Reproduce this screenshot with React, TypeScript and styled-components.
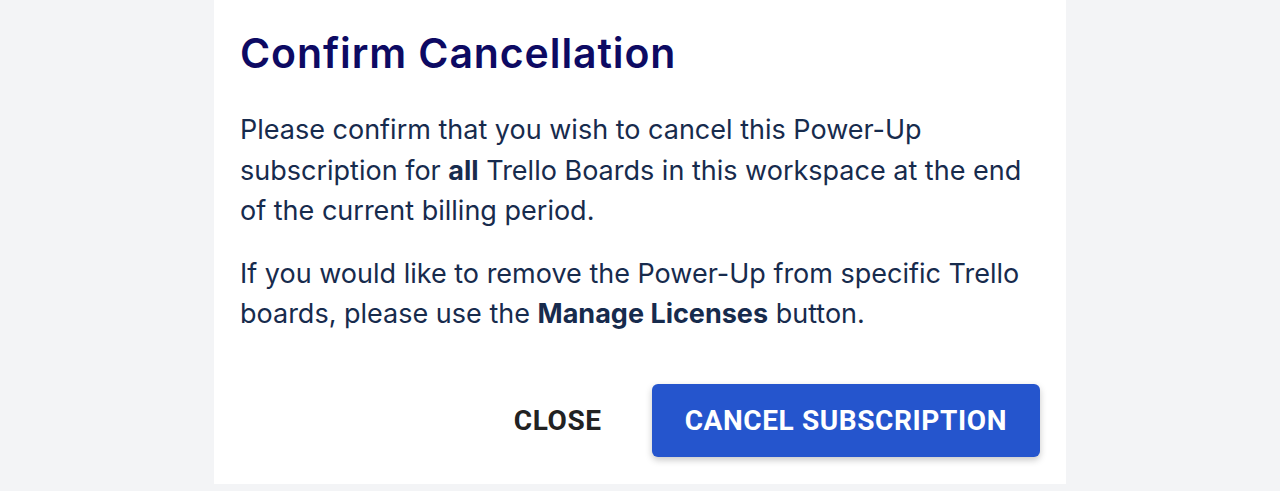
import React from "react";
import styled, { createGlobalStyle } from "styled-components";

const Global = createGlobalStyle`
  html, body { margin: 0; padding: 0; background: #f3f4f6; }
  body { font-family: Inter, "Noto Sans", sans-serif; }
`;

const Page = styled.div`
  display: flex;
  justify-content: center;
  min-height: 491px;
`;

const Card = styled.div`
  width: 852px;
  box-sizing: border-box;
  background: #ffffff;
  padding: 29px 26px 27px 26px;
  height: 484px;
`;

const Title = styled.h1`
  margin: 0;
  font-size: 41px;
  line-height: 48px;
  font-weight: 600;
  color: #0d0a63;
  letter-spacing: 0.9px;
`;

const Paragraph = styled.p<{ $first?: boolean }>`
  margin: ${(p) => (p.$first ? "33px 0 0" : "22px 0 0")};
  font-size: 27px;
  line-height: 40.5px;
  letter-spacing: 0;
  color: #172b4d;
  font-weight: 400;
  b { font-weight: 700; }
`;

const Actions = styled.div`
  display: flex;
  justify-content: flex-end;
  align-items: center;
  gap: 24px;
  margin-top: 49px;
`;

const TextButton = styled.button`
  font-family: Roboto, "Liberation Sans", sans-serif;
  font-weight: 700;
  font-size: 28px;
  letter-spacing: 0.6px;
  text-transform: uppercase;
  white-space: nowrap;
  background: transparent;
  border: none;
  color: #222222;
  padding: 0 26px;
  height: 73px;
  cursor: pointer;
`;

const PrimaryButton = styled(TextButton)`
  background: #2555cd;
  color: #ffffff;
  border-radius: 6px;
  padding: 0 33px;
  box-shadow: 0 3px 7px rgba(0, 0, 0, 0.22);
`;

export default function App() {
  return (
    <>
      <Global />
      <Page>
        <Card>
          <Title>Confirm Cancellation</Title>
          <Paragraph $first>
            Please confirm that you wish to cancel this Power-Up subscription for <b>all</b> Trello
            Boards in this workspace at the end of the current billing period.
          </Paragraph>
          <Paragraph>
            If you would like to remove the Power-Up from specific Trello boards, please use the{" "}
            <b>Manage Licenses</b> button.
          </Paragraph>
          <Actions>
            <TextButton>Close</TextButton>
            <PrimaryButton>Cancel Subscription</PrimaryButton>
          </Actions>
        </Card>
      </Page>
    </>
  );
}
